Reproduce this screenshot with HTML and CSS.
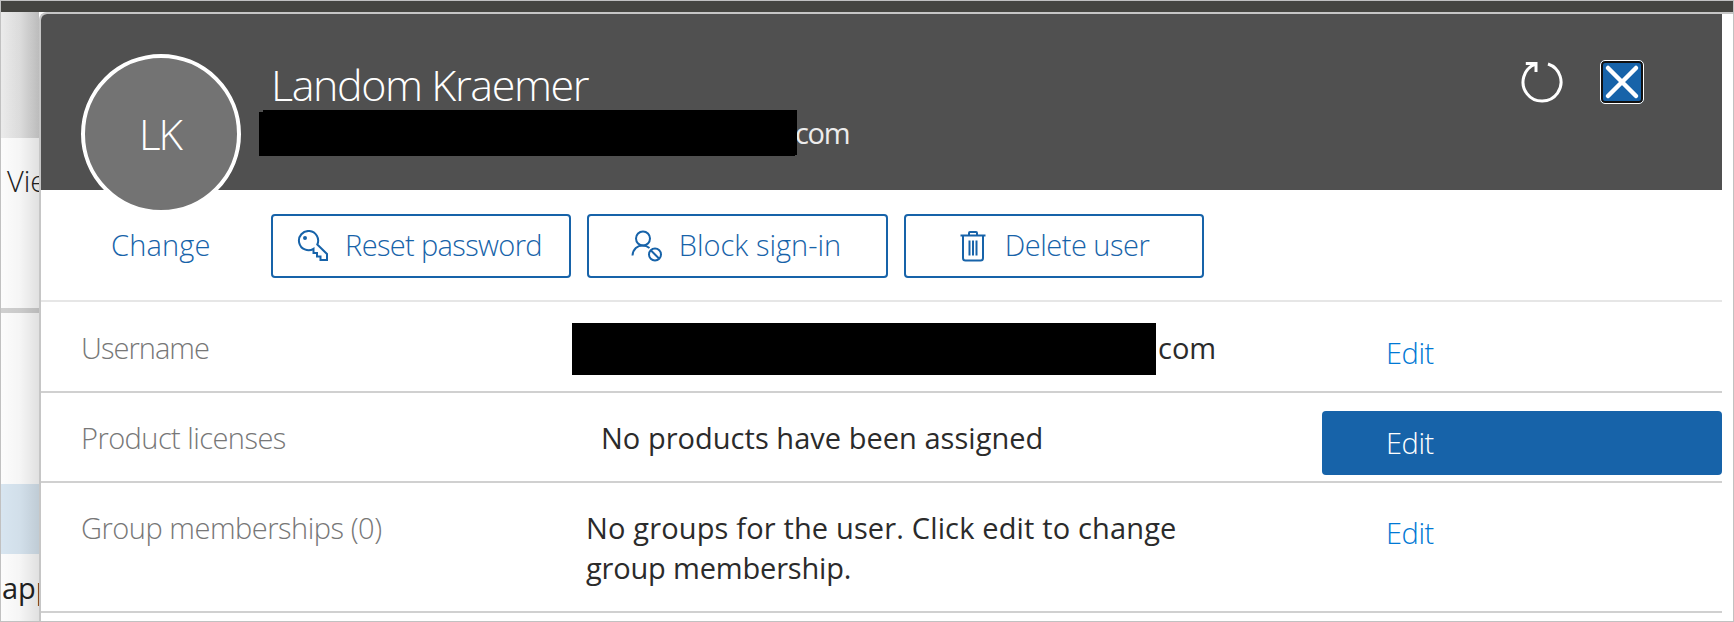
FILE: index.html
```
<!DOCTYPE html>
<html lang="en">
<head>
<meta charset="utf-8">
<title>Landom Kraemer</title>
<link rel="stylesheet" href="styles.css">
</head>
<body>
<div class="window">
  <div class="topbar"></div>
  <div class="backdrop">
    <div class="back-head"></div>
    <div class="back-views">Vie</div>
    <div class="back-list"></div>
    <div class="back-selected"></div>
    <div class="back-app">app</div>
  </div>
  <section class="panel">
    <header class="header">
      <div class="avatar"><span>LK</span></div>
      <div class="identity">
        <h1 class="name">Landom Kraemer</h1>
        <div class="email"><i class="mask mask-email"></i><span>com</span></div>
      </div>
      <div class="tools">
        <svg class="refresh" viewBox="0 0 44 44" width="44" height="44"><path d="M28 4A19 19 0 1 1 15.500 4.200M5.800 3.500H16V12" fill="none" stroke="#fff" stroke-width="3"/></svg>
        <button class="close" aria-label="Close"><svg viewBox="0 0 40 40" width="40" height="40"><path d="M6 6L34 34M34 6L6 34" stroke="#fff" stroke-width="4.500" stroke-linecap="round"/></svg></button>
      </div>
    </header>
    <div class="actions">
      <a class="change">Change</a>
      <button class="action action-reset"><svg class="ico" viewBox="0 0 32 32" width="32" height="32"><path d="M20.300 14.500L30 24V30H23.500V26.500H20V23H16.500V18.800A9.600 9.600 0 1 1 20.300 14.500Z"/><circle cx="8" cy="8" r="1" fill="#1763a9"/></svg><span>Reset password</span></button>
      <button class="action action-block"><svg class="ico" viewBox="0 0 32 32" width="32" height="32"><circle cx="12" cy="8.500" r="7"/><path d="M1.500 25.500C2 19 6.500 15.500 11.500 15.500C14 15.500 16.500 16.300 18.500 18"/><circle cx="24" cy="24.500" r="6"/><path d="M20 20.500L28 28.500"/></svg><span>Block sign-in</span></button>
      <button class="action action-delete"><svg class="ico" viewBox="0 0 32 32" width="32" height="32"><path d="M3.500 5.500H28.500M6 6V28Q6 30.500 8.500 30.500H23.500Q26 30.500 26 28V6M12 5V3Q12 2 13 2H19Q20 2 20 3V5M12.500 10.500V25.500M16 10.500V25.500M19.500 10.500V25.500"/></svg><span>Delete user</span></button>
    </div>
    <div class="row row-user">
      <div class="label">Username</div>
      <div class="value"><i class="mask mask-user"></i><span>com</span></div>
      <a class="edit">Edit</a>
    </div>
    <div class="row row-products">
      <div class="label">Product licenses</div>
      <div class="value">No products have been assigned</div>
      <a class="edit edit-active">Edit</a>
    </div>
    <div class="row row-groups">
      <div class="label">Group memberships (0)</div>
      <div class="value">No groups for the user. Click edit to change<br><span class="tight">group membership.</span></div>
      <a class="edit">Edit</a>
    </div>
  </section>
</div>
</body>
</html>
```
FILE: styles.css
```
* { box-sizing: border-box; }
html { overflow: hidden; }
body { margin: 0; font-family: "Open Sans", "Noto Sans", sans-serif; font-weight: 300; font-size: 29px; line-height: 40px; }
button { font: inherit; }
.window { position: relative; width: 1734px; height: 622px; border: 1px solid #c1c1c1; background: #fff; overflow: hidden; }
.topbar { height: 11px; background: #454541; }
.backdrop { position: relative; width: 38px; height: 609px; overflow: hidden; color: #222; }
.backdrop::after { content: ""; position: absolute; inset: 0; background: linear-gradient(90deg, rgba(0,0,0,.01), rgba(0,0,0,.04) 50%, rgba(0,0,0,.12)); }
.back-head { height: 126px; background: linear-gradient(90deg, #eee, #e4e4e4 50%, #d6d6d6); }
.back-views { height: 170px; padding: 23px 0 0 6px; }
.back-list { height: 176px; border-top: 5px solid #d2d2d2; }
.back-selected { height: 70px; background: #dae8f3; }
.back-app { padding: 14px 0 0 1px; font-weight: 400; }
.panel { position: absolute; left: 38px; top: 11px; width: 1694px; height: 609px; padding-right: 11px; border: 2px solid #c6c6c6; border-right: 0; border-bottom: 0; border-radius: 8px 0 0 0; background: #fff; overflow: hidden; white-space: nowrap; }
.header { display: flex; height: 176px; background: #505050; color: #fff; }
.avatar { flex: none; display: flex; align-items: center; justify-content: center; width: 160px; height: 160px; margin: 40px 0 0 40px; padding-right: 2px; border: 4px solid #fff; border-radius: 50%; background: #737373; font-size: 42px; letter-spacing: -2px; }
.identity { width: 700px; margin: 45px 0 0 18px; }
.name { height: 51px; margin: 0 0 0 12px; font-size: 43px; font-weight: 300; line-height: 51px; letter-spacing: -1.4px; }
.email { display: flex; align-items: center; height: 46px; color: #ececec; font-weight: 400; letter-spacing: -1.3px; }
.email span { margin-left: -2px; }
.mask { flex: none; background: #000; }
.mask-email { width: 538px; height: 46px; clip-path: polygon(4px 0, 100% 0, 100% 45px, 536px 45px, 536px 100%, 0 100%, 0 2px, 4px 2px); }
.tools { display: flex; gap: 36px; margin: 46px 78px 0 auto; }
.refresh { display: block; }
.close { width: 44px; height: 44px; padding: 1px; border: 1px solid #fff; border-radius: 5px; background: #1763a9; box-shadow: inset 0 0 0 2px #111; }
.close svg { display: block; }
.actions { display: flex; gap: 16px; height: 112px; padding-top: 24px; border-bottom: 2px solid #e6e6e6; color: #1763a9; }
.change { width: 214px; padding: 11px 0 0 70px; letter-spacing: .15px; }
.action { display: flex; align-items: center; justify-content: center; gap: 16px; width: 300px; height: 64px; padding: 0 3px 0 0; border: 2px solid #1763a9; border-radius: 4px; background: #fff; color: inherit; }
.action .ico { margin-top: -1px; }
.action span { margin-top: -2px; }
.action-reset { letter-spacing: -.65px; }
.action-block { width: 301px; }
.action-delete { padding-right: 2px; letter-spacing: -.5px; }
.ico { flex: none; fill: none; stroke: #1763a9; stroke-width: 2; }
.row { display: grid; grid-template-columns: 547px 734px 400px; border-bottom: 2px solid #d0d0d0; }
.row-user { height: 91px; }
.row-products { height: 90px; }
.row-groups { height: 130px; }
.label { padding: 25px 0 0 40px; color: #777; }
.row-user .label { padding-top: 26px; letter-spacing: -.95px; }
.row-products .label { letter-spacing: -.55px; }
.row-groups .label { letter-spacing: -.48px; }
.value { padding-top: 25px; color: #2b2b2b; font-weight: 400; }
.row-user .value { display: flex; gap: 2px; margin-left: -16px; padding-top: 21px; }
.row-user .value span { padding-top: 5px; }
.mask-user { width: 584px; height: 52px; }
.row-products .value { padding-left: 13px; letter-spacing: .03px; }
.row-groups .value { margin-left: -2px; letter-spacing: .15px; }
.row-groups .tight { letter-spacing: -.18px; }
.edit { height: 64px; margin-top: 18px; padding: 12px 0 0 64px; color: #0078d4; letter-spacing: -.45px; }
.row-user .edit { padding-top: 13px; }
.row .edit-active { border-radius: 4px; background: #1763a9; color: #fff; }
```
